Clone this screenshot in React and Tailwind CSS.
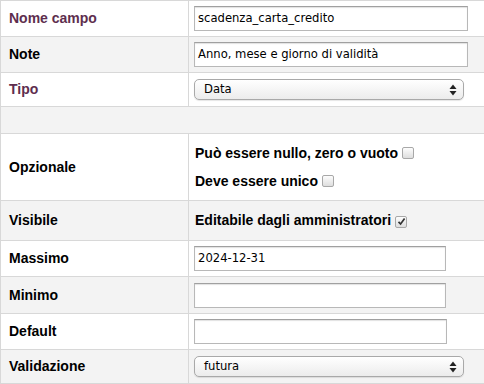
import React from "react";

const labelFont = { fontFamily: '"Liberation Sans", Arial, sans-serif' };

function TextInput({ value, width }) {
  return (
    <div
      className={`h-[25px] ${width} border border-[#b8b8b8] border-t-[#a0a0a0] bg-white shadow-[inset_0_1px_1px_rgba(0,0,0,0.12)] flex items-center pl-[3px] text-[11.6px] text-black font-['DejaVu_Sans',Verdana,sans-serif] whitespace-nowrap overflow-hidden`}
    >
      {value}
    </div>
  );
}

function Select({ value }) {
  return (
    <div className="h-[21px] w-[270px] rounded-[5px] border border-[#a9a9a9] bg-gradient-to-b from-white to-[#ececec] shadow-[0_1px_1px_rgba(0,0,0,0.1)] flex items-center justify-between pl-[9px] pr-[6px] text-[11.6px] text-black font-['DejaVu_Sans',Verdana,sans-serif]">
      <span>{value}</span>
      <svg width="8" height="12" viewBox="0 0 8 12">
        <path d="M4 0.5 L7.5 5 L0.5 5 Z" fill="#222" />
        <path d="M4 11.5 L7.5 7 L0.5 7 Z" fill="#222" />
      </svg>
    </div>
  );
}

function Checkbox({ checked }) {
  return (
    <span className="inline-flex items-center justify-center w-[12px] h-[12px] ml-[4px] rounded-[2px] border border-[#a8a8a8] bg-gradient-to-b from-[#fdfdfd] to-[#dedede] align-[-1px]">
      {checked && (
        <svg width="9" height="9" viewBox="0 0 9 9">
          <path d="M1.5 4.8 L3.6 7 L7.6 1.6" stroke="#333" strokeWidth="1.7" fill="none" />
        </svg>
      )}
    </span>
  );
}

function Row({ label, labelColor = "text-black", h, bg, children }) {
  return (
    <div className={`flex ${h} ${bg} border-b border-[#d8d8d8]`}>
      <div
        className={`w-[188px] shrink-0 border-r border-[#d8d8d8] flex items-center pl-[8px] text-[14px] font-bold ${labelColor}`}
        style={labelFont}
      >
        {label}
      </div>
      <div className="flex-1 flex items-center pl-[5px]">{children}</div>
    </div>
  );
}

export default function App() {
  return (
    <div className="w-[484px] h-[384px] bg-white overflow-hidden">
      <div className="border-t border-l border-[#d8d8d8]">
        <Row label="Nome campo" labelColor="text-[#5e2e4e]" h="h-[36px]" bg="bg-white">
          <TextInput value="scadenza_carta_credito" width="w-[274px]" />
        </Row>
        <Row label="Note" h="h-[36px]" bg="bg-[#f3f3f3]">
          <TextInput value="Anno, mese e giorno di validità" width="w-[274px]" />
        </Row>
        <Row label="Tipo" labelColor="text-[#5e2e4e]" h="h-[34px]" bg="bg-white">
          <Select value="Data" />
        </Row>
        <div className="h-[27px] bg-[#f3f3f3] border-b border-[#d8d8d8]" />
        <Row label="Opzionale" h="h-[67px]" bg="bg-white">
          <div
            className="flex flex-col gap-[13px] text-[14px] font-bold text-black pl-[1px]"
            style={labelFont}
          >
            <div className="leading-[15px]">
              Può essere nullo, zero o vuoto
              <Checkbox />
            </div>
            <div className="leading-[15px]">
              Deve essere unico
              <Checkbox />
            </div>
          </div>
        </Row>
        <Row label="Visibile" h="h-[40px]" bg="bg-[#f3f3f3]">
          <div className="text-[14px] font-bold text-black pl-[1px]" style={labelFont}>
            Editabile dagli amministratori
            <Checkbox checked />
          </div>
        </Row>
        <Row label="Massimo" h="h-[36px]" bg="bg-white">
          <TextInput value="2024-12-31" width="w-[252px]" />
        </Row>
        <Row label="Minimo" h="h-[37px]" bg="bg-[#f3f3f3]">
          <TextInput value="" width="w-[252px]" />
        </Row>
        <Row label="Default" h="h-[36px]" bg="bg-white">
          <TextInput value="" width="w-[253px]" />
        </Row>
        <Row label="Validazione" h="h-[34px]" bg="bg-[#f3f3f3]">
          <Select value="futura" />
        </Row>
      </div>
    </div>
  );
}
